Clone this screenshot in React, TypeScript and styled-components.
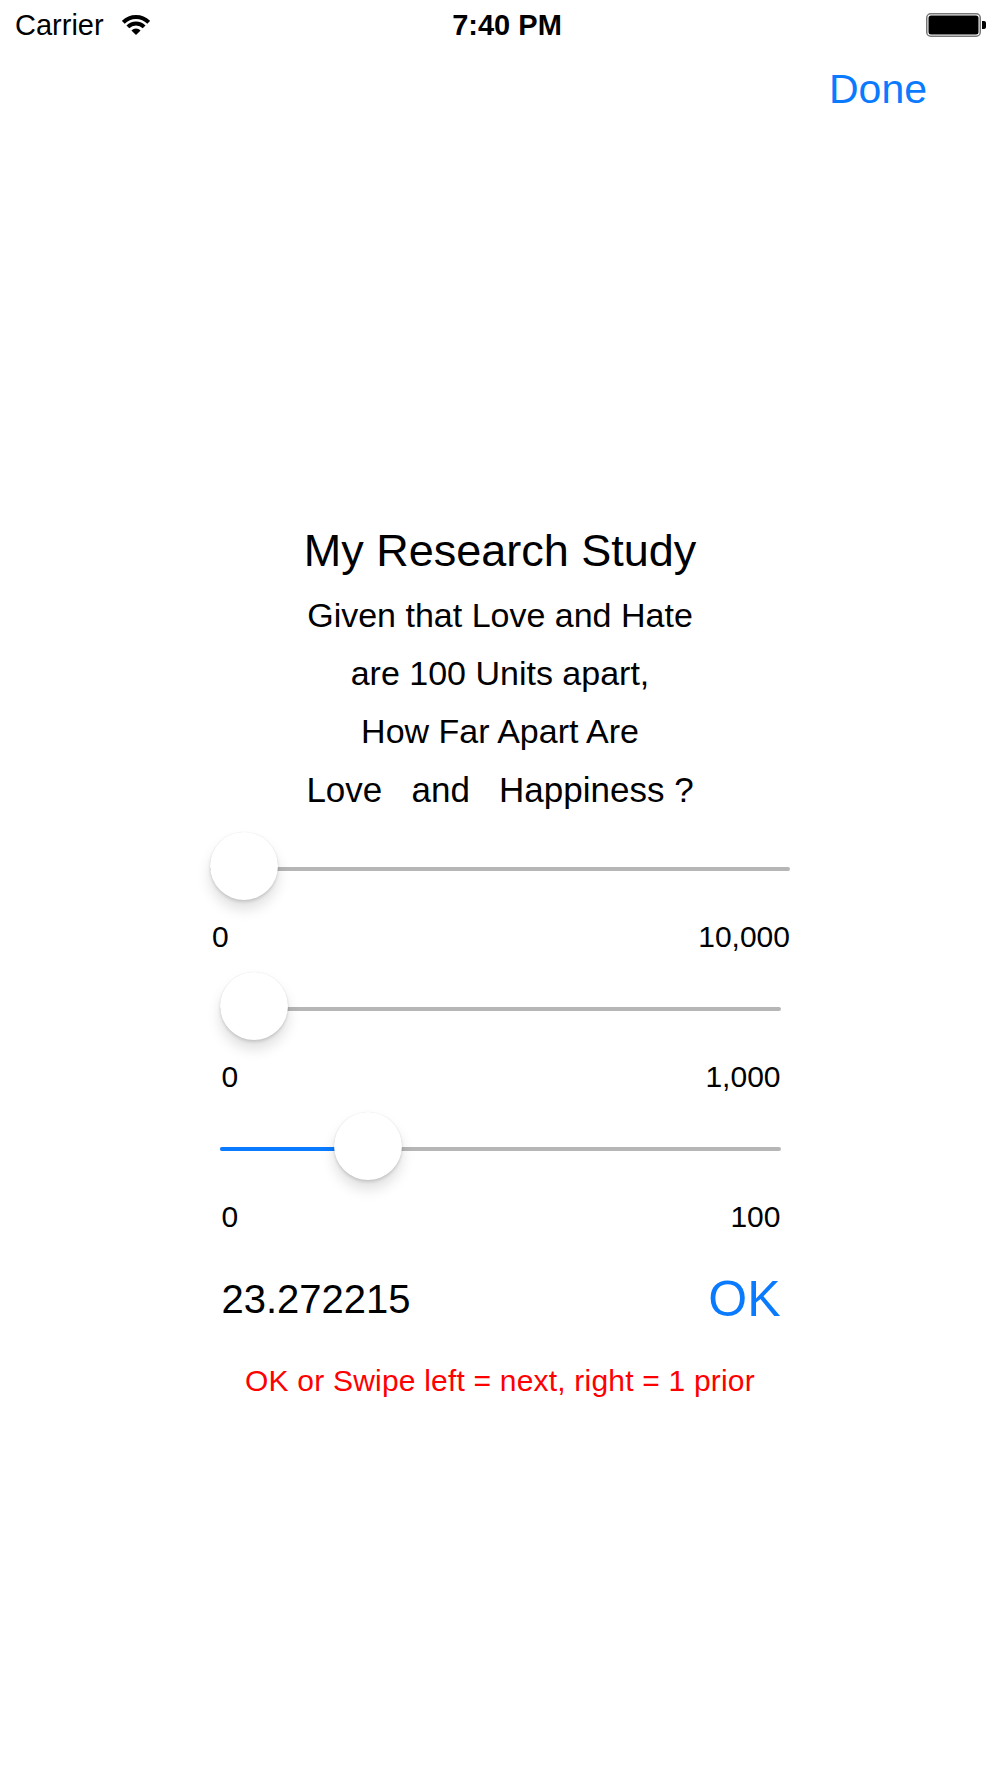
import React from 'react';
import styled, { createGlobalStyle } from 'styled-components';

const GlobalStyle = createGlobalStyle`
  html, body {
    margin: 0;
    padding: 0;
    background: #fff;
  }
  body {
    font-family: 'Liberation Sans', Arial, sans-serif;
    color: #000;
  }
`;

const Screen = styled.div`
  min-height: 1778px;
  display: flex;
  flex-direction: column;
  background: #fff;
`;

const StatusBar = styled.div`
  height: 50px;
  display: grid;
  grid-template-columns: 1fr auto 1fr;
  align-items: center;
  padding: 0 13px 0 15px;
  font-size: 29px;
`;

const Carrier = styled.div`
  display: flex;
  align-items: center;
  gap: 18px;
`;

const Clock = styled.div`
  font-weight: bold;
  padding-left: 12px;
`;

const BatteryWrap = styled.div`
  justify-self: end;
  display: flex;
  align-items: center;
`;

const NavBar = styled.div`
  height: 78px;
  display: flex;
  justify-content: flex-end;
  align-items: center;
  padding-right: 73px;
`;

const DoneButton = styled.div`
  color: #0a7aff;
  font-size: 41px;
  cursor: pointer;
`;

const Main = styled.div`
  display: flex;
  flex-direction: column;
  align-items: center;
  padding-top: 391px;
`;

const Title = styled.div`
  font-size: 45px;
  line-height: 64px;
  margin-bottom: 3px;
  text-align: center;
`;

const Line = styled.div<{ $big?: boolean }>`
  font-size: ${(p) => (p.$big ? 35 : 34)}px;
  line-height: ${(p) => (p.$big ? 60 : 58)}px;
  text-align: center;
  white-space: pre;
`;

const Sliders = styled.div`
  margin-top: 12px;
  display: flex;
  flex-direction: column;
  align-items: center;
`;

const SliderBlock = styled.div<{ $width: number }>`
  width: ${(p) => p.$width}px;
  display: flex;
  flex-direction: column;
  margin-bottom: 17px;
`;

const SliderRow = styled.div`
  position: relative;
  height: 68px;
`;

const Track = styled.div`
  position: absolute;
  left: 0;
  right: 0;
  top: 35px;
  height: 4px;
  border-radius: 2px;
  background: #b6b6b6;
  overflow: hidden;
`;

const TrackFill = styled.div`
  height: 100%;
  background: #0a7aff;
`;

const Thumb = styled.div`
  position: absolute;
  top: 0;
  width: 68px;
  height: 68px;
  border-radius: 50%;
  background: #fff;
  box-shadow: 0 9px 14px rgba(0, 0, 0, 0.13), 0 2px 3px rgba(0, 0, 0, 0.12),
    0 0 1px rgba(0, 0, 0, 0.12);
`;

const Labels = styled.div`
  display: flex;
  justify-content: space-between;
  margin-top: 19px;
  padding-left: 2px;
  font-size: 30px;
  line-height: 36px;
`;

const ResultRow = styled.div`
  width: 561px;
  height: 56px;
  margin-top: 19px;
  padding-left: 2px;
  box-sizing: border-box;
  display: flex;
  justify-content: space-between;
  align-items: center;
`;

const Value = styled.div`
  font-size: 40px;
  line-height: 56px;
`;

const OkButton = styled.div`
  font-size: 50px;
  line-height: 56px;
  color: #0a7aff;
  cursor: pointer;
`;

const Hint = styled.div`
  margin-top: 36px;
  font-size: 30px;
  line-height: 36px;
  letter-spacing: 0.2px;
  color: #ff0000;
  text-align: center;
`;

function Wifi() {
  return (
    <svg width="28" height="24" viewBox="0 0 28 24">
      <path
        d="M1.27 9.27 A18 18 0 0 1 26.73 9.27"
        fill="none"
        stroke="#000"
        strokeWidth="4"
      />
      <path
        d="M5.87 13.87 A11.5 11.5 0 0 1 22.13 13.87"
        fill="none"
        stroke="#000"
        strokeWidth="4"
      />
      <path d="M14 22 L9.4 17.4 A6.5 6.5 0 0 1 18.6 17.4 Z" fill="#000" />
    </svg>
  );
}

function Battery() {
  return (
    <svg width="61" height="24" viewBox="0 0 61 24">
      <rect x="0.75" y="0.75" width="53.5" height="22.5" rx="4" fill="none" stroke="#777" strokeWidth="1.5" />
      <rect x="2.5" y="2.5" width="50" height="19" rx="2.5" fill="#000" />
      <path d="M56 8 h2 a2 2 0 0 1 2 2 v4 a2 2 0 0 1 -2 2 h-2 z" fill="#000" />
    </svg>
  );
}

interface SliderProps {
  width: number;
  value: number;
  min: string;
  max: string;
  filled?: boolean;
}

function Slider({ width, value, min, max, filled }: SliderProps) {
  const thumbLeft = value * (width - 68);
  return (
    <SliderBlock $width={width}>
      <SliderRow>
        <Track>
          {filled && <TrackFill style={{ width: thumbLeft + 34 }} />}
        </Track>
        <Thumb style={{ left: thumbLeft }} />
      </SliderRow>
      <Labels>
        <span>{min}</span>
        <span>{max}</span>
      </Labels>
    </SliderBlock>
  );
}

export default function App() {
  return (
    <Screen>
      <GlobalStyle />
      <StatusBar>
        <Carrier>
          <span>Carrier</span>
          <Wifi />
        </Carrier>
        <Clock>7:40 PM</Clock>
        <BatteryWrap>
          <Battery />
        </BatteryWrap>
      </StatusBar>
      <NavBar>
        <DoneButton>Done</DoneButton>
      </NavBar>
      <Main>
        <Title>My Research Study</Title>
        <Line>Given that Love and Hate</Line>
        <Line>are 100 Units apart,</Line>
        <Line>How Far Apart Are</Line>
        <Line $big>{'Love   and   Happiness ?'}</Line>
        <Sliders>
          <Slider width={580} value={0} min="0" max="10,000" />
          <Slider width={561} value={0} min="0" max="1,000" />
          <Slider width={561} value={0.2327} min="0" max="100" filled />
        </Sliders>
        <ResultRow>
          <Value>23.272215</Value>
          <OkButton>OK</OkButton>
        </ResultRow>
        <Hint>OK or Swipe left = next, right = 1 prior</Hint>
      </Main>
    </Screen>
  );
}
